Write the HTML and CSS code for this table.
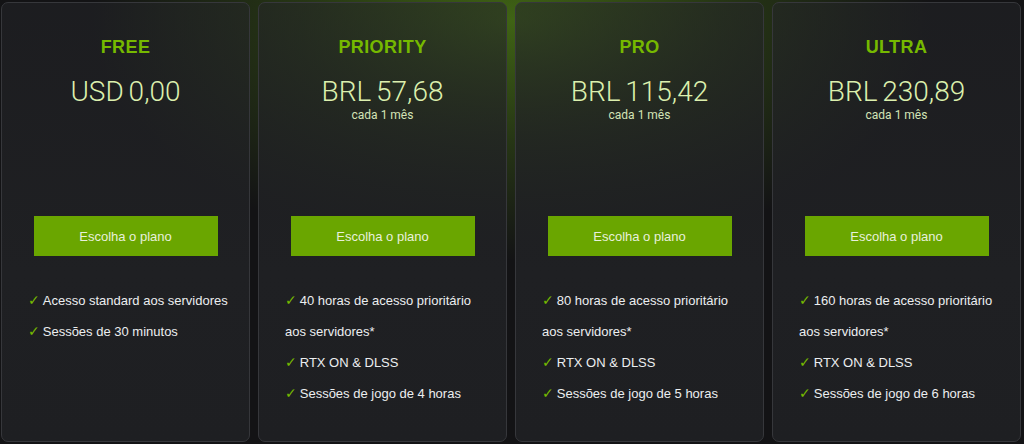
FILE: index.html
```html
<!DOCTYPE html>
<html lang="pt-BR">
<head>
<meta charset="utf-8">
<title>Planos</title>
<link rel="stylesheet" href="styles.css">
</head>
<body>
<div class="plans">
  <div class="card">
    <div class="head">
      <h2 class="name">FREE</h2>
      <div class="price">USD 0,00</div>
    </div>
    <a class="btn">Escolha o plano</a>
    <ul class="features">
      <li>Acesso standard aos servidores</li>
      <li>Sessões de 30 minutos</li>
    </ul>
  </div>
  <div class="card">
    <div class="head">
      <h2 class="name">PRIORITY</h2>
      <div class="price">BRL 57,68</div>
      <div class="period">cada 1 mês</div>
    </div>
    <a class="btn">Escolha o plano</a>
    <ul class="features">
      <li>40 horas de acesso prioritário aos servidores*</li>
      <li>RTX ON &amp; DLSS</li>
      <li>Sessões de jogo de 4 horas</li>
    </ul>
  </div>
  <div class="card">
    <div class="head">
      <h2 class="name">PRO</h2>
      <div class="price">BRL 115,42</div>
      <div class="period">cada 1 mês</div>
    </div>
    <a class="btn">Escolha o plano</a>
    <ul class="features">
      <li>80 horas de acesso prioritário aos servidores*</li>
      <li>RTX ON &amp; DLSS</li>
      <li>Sessões de jogo de 5 horas</li>
    </ul>
  </div>
  <div class="card">
    <div class="head">
      <h2 class="name">ULTRA</h2>
      <div class="price">BRL 230,89</div>
      <div class="period">cada 1 mês</div>
    </div>
    <a class="btn">Escolha o plano</a>
    <ul class="features">
      <li>160 horas de acesso prioritário aos servidores*</li>
      <li>RTX ON &amp; DLSS</li>
      <li>Sessões de jogo de 6 horas</li>
    </ul>
  </div>
</div>
</body>
</html>
```
FILE: styles.css
```css
* { box-sizing: border-box; }
html, body { margin: 0; height: 100%; }
body {
  background-color: #131315;
  background-image: radial-gradient(ellipse 420px 240px at 512px 20px, rgba(100, 165, 20, 0.55), rgba(100, 165, 20, 0.24) 50%, rgba(100, 165, 20, 0) 100%);
  background-repeat: no-repeat;
  font-family: "Liberation Sans", Arial, sans-serif;
  overflow: hidden;
}
.plans {
  display: grid;
  grid-template-columns: repeat(4, 249px);
  gap: 8px;
  padding: 2px 0 0 1px;
  height: 442px;
}
.card {
  border: 1px solid #36373b;
  border-radius: 7px;
  background: linear-gradient(180deg, rgba(36, 37, 41, 0.55) 0%, rgba(33, 34, 37, 0.78) 35%, #1f2023 62%, #1e1f22 100%);
  padding: 34px 0 0;
  display: flex;
  flex-direction: column;
  align-items: center;
}
.head {
  height: 179px;
  display: flex;
  flex-direction: column;
  align-items: center;
}
.name {
  margin: 0;
  font-family: "Liberation Sans", Arial, sans-serif;
  font-weight: 700;
  font-size: 18px;
  line-height: 20px;
  letter-spacing: 0.4px;
  color: #76b900;
}
.price {
  margin-top: 18px;
  font-family: Roboto, "Liberation Sans", sans-serif;
  font-weight: 300;
  font-size: 28px;
  line-height: 34px;
  color: #dcf0ae;
  word-spacing: -2px;
}
.period {
  font-family: Roboto, "Liberation Sans", sans-serif;
  font-size: 12px;
  line-height: 16px;
  color: #d3e3b6;
  margin-top: -2px;
}
.btn {
  display: flex;
  align-items: center;
  justify-content: center;
  width: 184px;
  height: 40px;
  background: #6aa600;
  color: #e8f0dc;
  font-size: 13px;
  cursor: pointer;
}
.features {
  list-style: none;
  align-self: stretch;
  margin: 29px 0 0;
  padding: 0 20px 0 26px;
}
.features li {
  font-size: 13px;
  line-height: 31px;
  color: #eceef0;
}
.features li::before {
  content: "✓";
  color: #76b900;
  font-family: "DejaVu Sans", sans-serif;
  font-size: 14px;
  margin-right: 3px;
}
```
